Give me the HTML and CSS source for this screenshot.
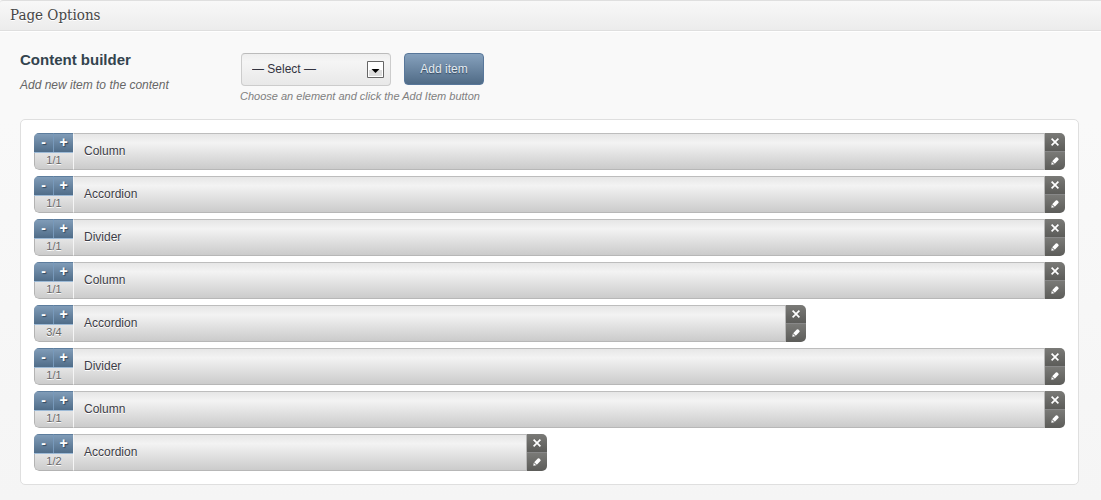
FILE: index.html
```html
<!DOCTYPE html>
<html lang="en">
<head>
<meta charset="utf-8">
<title>Page Options</title>
<link rel="stylesheet" href="styles.css">
</head>
<body>
<svg class="symbols" aria-hidden="true">
  <symbol id="close" viewBox="0 0 8 8"><path d="M.6.6l6.800 6.800M7.400.6L.6 7.400" fill="none" stroke="#fff" stroke-width="1.700"/></symbol>
  <symbol id="edit" viewBox="0 0 8 8"><path d="M.3 7.700L.8 4.700 3.300 7.200z" fill="#fff"/><path d="M1.200 4.200L4.800.6Q5.600-.1 6.400.6L7.300 1.500Q8.100 2.300 7.400 3.100L3.800 6.800z" fill="#fff"/><path d="M1.700 5.400l1 1" stroke="#666" stroke-width=".7"/></symbol>
</svg>
<header class="header"><h1 class="header-title">Page Options</h1></header>
<main class="content">
  <form class="builder">
    <div class="intro">
      <h2 class="intro-title"><label for="element">Content builder</label></h2>
      <p class="intro-text">Add new item to the content</p>
    </div>
    <div class="chooser">
      <div class="controls">
        <div class="select-box">
          <select class="select" id="element"><option>— Select —</option></select>
          <svg class="select-arrow" viewBox="0 0 17 17" aria-hidden="true"><path d="M.5.5h16v16H.5z" fill="#fff" stroke="#666"/><path d="M2 9h13v6H2z" fill="#ddd"/><path d="M4.500 8h8l-4 4z" fill="#000"/></svg>
        </div>
        <button class="add" type="button">Add item</button>
      </div>
      <p class="hint">Choose an element and click the Add Item button</p>
    </div>
  </form>
  <ul class="items" id="items"></ul>
</main>
<script src="items.js"></script>
</body>
</html>
```

FILE: styles.css
```css
* { box-sizing: border-box; }
body {
  margin: 0;
  min-height: 100vh;
  background: linear-gradient(#f9f9f9, #f9f9f9 120px, #f5f5f5 500px);
  color: #464646;
  font: 12px/16px "Liberation Sans", Arial, sans-serif;
}
h1, h2, p, ul { margin: 0; padding: 0; }
button, select { font: inherit; margin: 0; padding: 0; }
.symbols { display: none; }
.header {
  height: 31px;
  padding: 0 10px;
  border-top: 1px solid #dfdfdf;
  border-bottom: 1px solid #dfdfdf;
  border-top-left-radius: 3px;
  background: linear-gradient(#f8f8f8, #ececec);
  box-shadow: 0 1px 0 #fff;
}
.header-title {
  color: #464646;
  font: 15px/29px "DejaVu Serif Condensed", "DejaVu Serif", Georgia, serif;
  text-shadow: 0 1px 0 #fff;
}
.content { padding: 22px 22px 15px 20px; }
.builder { display: flex; align-items: flex-start; }
.intro { width: 220px; flex: none; }
.intro-title { color: #33444e; font-size: 15px; line-height: 14px; }
.intro-text { margin-top: 10px; color: #666; font-style: italic; }
.controls { display: flex; gap: 13px; padding-left: 1px; }
.select-box { position: relative; width: 150px; }
.select {
  appearance: none;
  width: 100%;
  height: 33px;
  padding: 0 30px 1px 10px;
  border: 1px solid #ccc;
  border-top-color: #bbb;
  border-radius: 4px;
  background: linear-gradient(#eee, #f5f5f5 25%, #e8e8e8);
  color: #33333f;
}
.select-arrow {
  position: absolute;
  top: 8px;
  right: 7px;
  width: 17px;
  height: 17px;
  pointer-events: none;
}
.add {
  width: 80px;
  height: 32px;
  border: 1px solid #58779a;
  border-radius: 4px;
  background: linear-gradient(#86a1bd, #506b86);
  color: #e4ebf2;
  text-shadow: 0 1px 1px #34495e;
}
.hint { margin-top: 2px; color: #808080; font-size: 11px; font-style: italic; }
.items {
  display: grid;
  gap: 6px;
  margin-top: 15px;
  padding: 13px;
  border: 1px solid #dfdfdf;
  border-radius: 5px;
  background: #fff;
  list-style: none;
}
.item {
  display: flex;
  height: 37px;
  overflow: hidden;
  border-radius: 5px;
}
.item-full { width: 100%; }
.item-three-quarters { width: calc(75% - 1px); }
.item-half { width: calc(50% - 3px); }
.sizer {
  display: flex;
  flex-direction: column;
  flex: none;
  width: 39px;
  border: 1px solid #b3b3b3;
  border-width: 0 0 1px 1px;
  border-bottom-left-radius: 5px;
  background: linear-gradient(#e8e8e8 50%, #ccc);
}
.steps { display: flex; height: 20px; margin-left: -1px; border-bottom: 1px solid #9dbad6; }
.step {
  flex: 1;
  padding-bottom: 2px;
  border: 0;
  border-top: 1px solid #5d7d9d;
  background: linear-gradient(#809cb8, #506d89);
  color: #fff;
  font-size: 14px;
  font-weight: bold;
  line-height: 16px;
  text-shadow: 1px 1px 1px #34495e;
}
.step + .step { border-left: 1px solid #7799bb; }
.size {
  color: #666;
  font-size: 11px;
  line-height: 15px;
  text-align: center;
  text-shadow: 0 1px 0 #fff;
}
.name {
  flex: 1;
  padding-left: 10px;
  border: 1px solid #b7b7b7;
  border-top-color: #bdbdbd;
  border-left-color: #f5f5f5;
  background: linear-gradient(#e6e6e6, #f3f3f3 25%, #cbcbcb);
  color: #3c3c46;
  line-height: 34px;
  text-shadow: 0 1px 0 #fff;
}
.actions { display: flex; flex-direction: column; flex: none; width: 20px; }
.action {
  display: flex;
  flex: 1;
  align-items: center;
  justify-content: center;
  border: 0;
  background: linear-gradient(#7a7a77, #5c5c59);
}
.action + .action { border-top: 1px solid #888; }
.icon { width: 8px; height: 8px; }
```

FILE: items.js
```js
const sizes = { '1/1': 'full', '3/4': 'three-quarters', '1/2': 'half' };
const items = [
  ['Column', '1/1'], ['Accordion', '1/1'], ['Divider', '1/1'], ['Column', '1/1'],
  ['Accordion', '3/4'], ['Divider', '1/1'], ['Column', '1/1'], ['Accordion', '1/2']
];

document.getElementById('items').innerHTML = items.map(([name, size]) => `
  <li class="item item-${sizes[size]}">
    <div class="sizer">
      <div class="steps">
        <button class="step" type="button" aria-label="Decrease width">-</button>
        <button class="step" type="button" aria-label="Increase width">+</button>
      </div>
      <span class="size">${size}</span>
    </div>
    <div class="name">${name}</div>
    <div class="actions">
      <button class="action" type="button" aria-label="Remove"><svg class="icon"><use href="#close"/></svg></button>
      <button class="action" type="button" aria-label="Edit"><svg class="icon"><use href="#edit"/></svg></button>
    </div>
  </li>`).join('');
```
